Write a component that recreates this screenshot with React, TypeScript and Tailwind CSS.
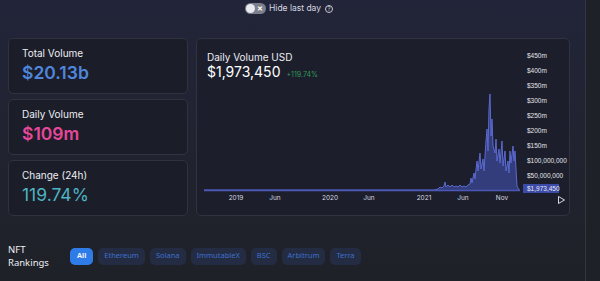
import React from "react";

const pts: [number, number][] = [
  [0, 189], [60, 189], [120, 189], [180, 189], [230, 189], [234, 188], [236, 186], [238, 187],
  [240, 185], [241, 181], [242, 186], [244, 184], [246, 186], [248, 184], [250, 186], [252, 185],
  [254, 186], [256, 184], [258, 186], [260, 185], [262, 186], [264, 184], [266, 183], [267, 177],
  [268, 182], [270, 172], [271, 178], [273, 160], [274, 170], [276, 152], [277, 168], [279, 158],
  [280, 170], [282, 140], [283, 128], [284, 150], [285, 108], [286, 93], [287, 135], [288, 118],
  [289, 145], [291, 152], [292, 138], [293, 160], [295, 148], [296, 162], [298, 140], [299, 165],
  [301, 150], [302, 170], [304, 160], [305, 172], [306, 150], [307, 162], [309, 145], [310, 160],
  [311, 150], [312, 168], [313, 185], [315, 189], [316, 189],
];

function Chart() {
  const mapped = pts.map(([x, y]) => [x, y - 80] as [number, number]);
  const line = mapped.map(([x, y], i) => `${i ? "L" : "M"}${x} ${y}`).join(" ");
  const area = `${line} L316 110 L0 110 Z`;
  const xl: [string, number][] = [
    ["2019", 32], ["Jun", 71], ["2020", 126], ["Jun", 165], ["2021", 220], ["Jun", 259], ["Nov", 298],
  ];
  return (
    <svg width="316" height="125" viewBox="0 0 316 125" className="block">
      <path d={area} fill="#4452b0" fillOpacity="0.6" />
      <path d={line} fill="none" stroke="#5a6ad0" strokeWidth="1" />
      <line x1="0" y1="109.5" x2="316" y2="109.5" stroke="#4b58b8" strokeWidth="1.5" />
      {xl.map(([t, x], i) => (
        <text key={i} x={x} y="119" fill="#d8dae2" fontSize="6.5" textAnchor="middle" fontFamily="Inter, sans-serif">
          {t}
        </text>
      ))}
    </svg>
  );
}

function StatCard({ label, value, color, weight }: { label: string; value: string; color: string; weight: string }) {
  return (
    <div className="flex-1 rounded-[5px] border border-[#30333f] bg-[#1b1d28] pl-[13px] pt-[7px]">
      <div className="text-[10px] leading-[14px] text-[#eceef3]">{label}</div>
      <div className={`mt-[2px] text-[17.5px] leading-[22px] ${weight} ${color}`}>{value}</div>
    </div>
  );
}

const yl = ["$450m", "$400m", "$350m", "$300m", "$250m", "$200m", "$150m", "$100,000,000", "$50,000,000"];

export default function App() {
  return (
    <div
      className="flex h-[281px] w-[600px] overflow-hidden bg-gradient-to-b from-[#222539] to-[#1f2128]"
      style={{ fontFamily: "Inter, 'Noto Sans', sans-serif" }}
    >
      <div className="flex w-[586px] flex-col border-r border-[#33363f]">
        <div className="flex items-center pl-[245px] pt-[3px]">
          <div className="relative flex h-[11px] w-[21px] items-center rounded-full bg-[#7d808c]">
            <div className="ml-[1px] h-[9px] w-[9px] rounded-full bg-[#e9ebf1]" />
            <span className="ml-[2px] text-[7px] font-bold leading-none text-white">✕</span>
          </div>
          <span className="ml-[3px] text-[8.5px] leading-[11px] text-[#d6d8e0]">Hide last day</span>
          <div className="ml-[4px] flex h-[8px] w-[8px] items-center justify-center rounded-full border border-[#c8cad2] text-[6px] leading-none text-[#c8cad2]">
            ?
          </div>
        </div>
        <div className="ml-[8px] mt-[24px] flex h-[178px] gap-[8px]">
          <div className="flex w-[180px] flex-col gap-[5px]">
            <StatCard label="Total Volume" value="$20.13b" color="text-[#4f86dc]" weight="font-semibold" />
            <StatCard label="Daily Volume" value="$109m" color="text-[#e6489a]" weight="font-semibold" />
            <StatCard label="Change (24h)" value="119.74%" color="text-[#4eb3c2]" weight="font-normal" />
          </div>
          <div className="flex w-[374px] rounded-[5px] border border-[#30333f] bg-[#1c1e2b]">
            <div className="flex flex-col pl-[7px] pt-[12px]">
              <div className="pl-[3px] text-[10px] leading-[12px] text-[#eceef3]">Daily Volume USD</div>
              <div className="flex items-baseline pl-[3px]">
                <span className="text-[14px] leading-[17px] text-white">$1,973,450</span>
                <span className="ml-[6px] text-[7px] text-[#2e9b58]">+119.74%</span>
              </div>
              <Chart />
            </div>
            <div className="flex flex-col pl-[3px] pt-[9px]" style={{ fontFamily: "'Liberation Sans', sans-serif" }}>
              {yl.map((t) => (
                <div key={t} className="h-[15px] pl-[4px] text-[6.5px] leading-[15px] text-[#e2e4ea]">
                  {t}
                </div>
              ))}
              <div className="mt-[1px] h-[9px] w-[36px] bg-[#3c4aa8] pl-[4px] text-[6.5px] leading-[9px] text-[#e8eaf5]">
                $1,973,450
              </div>
              <svg width="9" height="10" viewBox="0 0 9 10" className="ml-[34px] mt-[2px]">
                <path d="M1.5 1.5 L7.5 5 L1.5 8.5 Z" fill="none" stroke="#d8dae2" strokeWidth="1" strokeLinejoin="round" />
              </svg>
            </div>
          </div>
        </div>
        <div className="ml-[8px] mt-[27px] flex items-center" style={{ fontFamily: "'Noto Sans', sans-serif" }}>
          <div className="w-[62px] text-[9.5px] leading-[13px] text-[#eef0f4]">
            <div>NFT</div>
            <div>Rankings</div>
          </div>
          <div className="flex gap-[5px] text-[7.5px]">
            <div className="flex h-[17px] items-center rounded-[5px] bg-[#2f7ce9] px-[7px] font-semibold text-white">All</div>
            {["Ethereum", "Solana", "ImmutableX", "BSC", "Arbitrum", "Terra"].map((t) => (
              <div key={t} className="flex h-[17px] items-center rounded-[5px] bg-[#232c42] px-[6px] text-[#3f70cc]">
                {t}
              </div>
            ))}
          </div>
        </div>
      </div>
      <div className="flex-1 bg-[#1f2129]" />
    </div>
  );
}
